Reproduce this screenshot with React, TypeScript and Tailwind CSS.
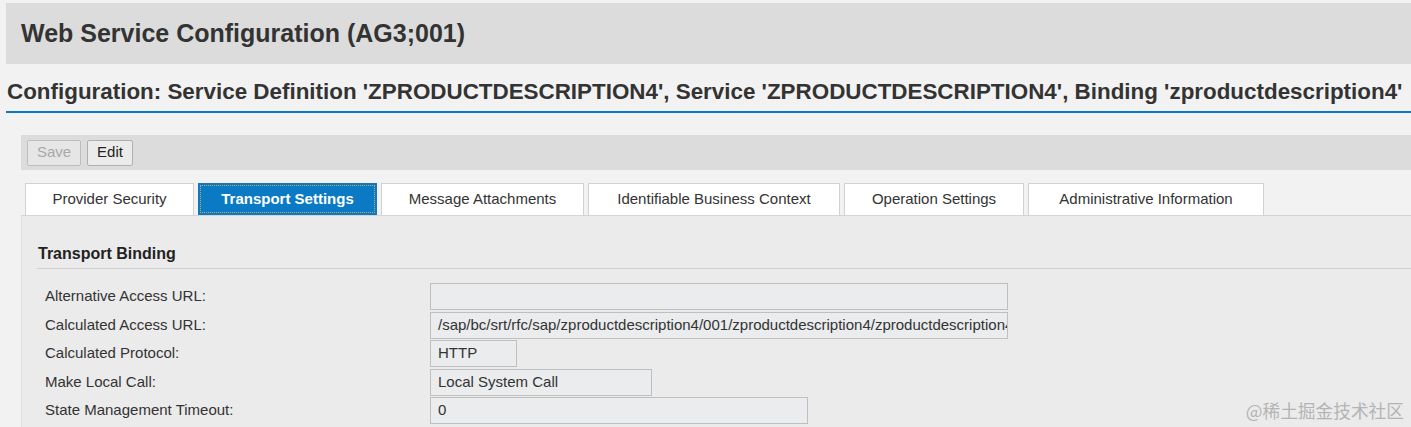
const tabs = [
  { label: "Provider Security", width: 169 },
  { label: "Transport Settings", width: 179, active: true },
  { label: "Message Attachments", width: 203 },
  { label: "Identifiable Business Context", width: 252 },
  { label: "Operation Settings", width: 180 },
  { label: "Administrative Information", width: 236 },
];

const fields = [
  { label: "Alternative Access URL:", value: "", width: 578 },
  {
    label: "Calculated Access URL:",
    value: "/sap/bc/srt/rfc/sap/zproductdescription4/001/zproductdescription4/zproductdescription4",
    width: 578,
  },
  { label: "Calculated Protocol:", value: "HTTP", width: 87 },
  { label: "Make Local Call:", value: "Local System Call", width: 222 },
  { label: "State Management Timeout:", value: "0", width: 378 },
];

export default function App() {
  return (
    <div className="relative h-[427px] w-full overflow-hidden bg-[#f2f2f2] pl-[6px] pt-[3px] font-['Liberation_Sans',Arial,sans-serif] text-[#333]">
      <div className="flex h-[61px] items-center bg-[#dcdcdc] pl-[15px] text-[25px] font-bold">
        Web Service Configuration (AG3;001)
      </div>

      <div className="whitespace-nowrap border-b-[2px] border-[#0a78c6] pb-[7px] pl-[1px] pt-[15px] text-[22.4px] font-bold leading-[25px]">
        Configuration: Service Definition 'ZPRODUCTDESCRIPTION4', Service 'ZPRODUCTDESCRIPTION4', Binding 'zproductdescription4'
      </div>

      <div className="ml-[15px] mt-[22px] flex h-[35px] items-center gap-[6px] bg-[#dcdcdc] pl-[6px]">
        <button
          type="button"
          disabled
          className="h-[26px] w-[54px] rounded-[2px] border border-[#bdbdbd] bg-[#e6e6e6] text-[15px] text-[#a8a8a8]"
        >
          Save
        </button>
        <button
          type="button"
          className="h-[26px] w-[46px] rounded-[2px] border border-[#b0b0b0] bg-[#ebebeb] text-[15px] text-[#222]"
        >
          Edit
        </button>
      </div>

      <div className="ml-[15px] mt-[13px] flex gap-[4px] pl-[4px]">
        {tabs.map((tab) =>
          tab.active ? (
            <div
              key={tab.label}
              style={{ width: tab.width }}
              className="flex h-[32px] items-center justify-center bg-[#0a7ac4] p-[2px]"
            >
              <div className="flex h-full w-full items-center justify-center border border-dotted border-[#e3a23a] text-[15px] font-bold text-white">
                {tab.label}
              </div>
            </div>
          ) : (
            <div
              key={tab.label}
              style={{ width: tab.width }}
              className="flex h-[32px] items-center justify-center border border-b-0 border-[#d2d2d2] bg-white text-[15px] text-[#333]"
            >
              {tab.label}
            </div>
          ),
        )}
      </div>

      <div className="ml-[15px] h-[300px] border-l border-t border-[#d4d4d4] border-l-[#e0e0e0] bg-[#ebebeb]">
        <div className="ml-[15px] border-b border-[#cfcfcf] pb-[5px] pl-[1px] pt-[29px] text-[16px] font-bold leading-[18px] text-[#222]">
          Transport Binding
        </div>

        <div className="mt-[14px] flex flex-col gap-[1.5px] pl-[23px]">
          {fields.map((field) => (
            <div key={field.label} className="flex items-center">
              <div className="w-[385px] text-[15px] text-[#333]">{field.label}</div>
              <div
                style={{ width: field.width }}
                className="flex h-[27px] items-center overflow-hidden whitespace-nowrap border border-[#bfbfbf] bg-[#eaecee] pl-[7px] text-[15px] text-[#333]"
              >
                {field.value}
              </div>
            </div>
          ))}
        </div>
      </div>

      <div className="absolute bottom-[3px] right-[7px] font-['Noto_Sans_CJK_SC',sans-serif] text-[17.7px] text-[#b4b4b4]">
        @稀土掘金技术社区
      </div>
    </div>
  );
}
